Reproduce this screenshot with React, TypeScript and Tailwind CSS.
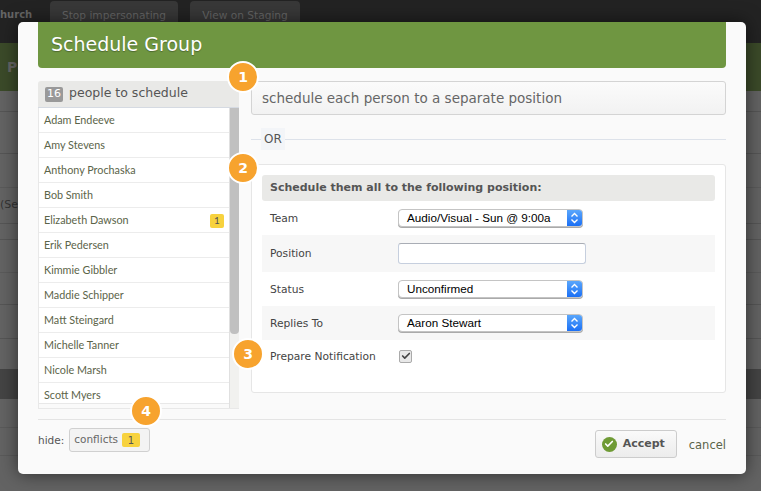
import { Check } from "lucide-react"

const people = [
  "Adam Endeeve",
  "Amy Stevens",
  "Anthony Prochaska",
  "Bob Smith",
  "Elizabeth Dawson",
  "Erik Pedersen",
  "Kimmie Gibbler",
  "Maddie Schipper",
  "Matt Steingard",
  "Michelle Tanner",
  "Nicole Marsh",
  "Scott Myers",
]

const sans = "font-['DejaVu_Sans',sans-serif]"

function Step({ n, className }: { n: number; className: string }) {
  return (
    <div
      className={`absolute flex h-[32px] w-[32px] items-center justify-center rounded-full border-[2px] border-white bg-[#f7a32e] text-[14px] font-bold text-white ${className}`}
    >
      {n}
    </div>
  )
}

function Flag({ className = "" }: { className?: string }) {
  return (
    <span
      className={`flex h-[14px] w-[14px] items-center justify-center rounded-[2px] bg-[#f7d23e] text-[10px] text-[#555] ${className}`}
    >
      1
    </span>
  )
}

function FakeSelect({ value }: { value: string }) {
  return (
    <div className="flex h-[18px] w-[185px] items-stretch overflow-hidden rounded-[4px] border border-[#c4c4c4] bg-white shadow-[0_1px_0_#aaa]">
      <span className="flex-1 pl-[8px] font-['Liberation_Sans',sans-serif] text-[11.7px] leading-[16px] text-black">
        {value}
      </span>
      <span className="flex w-[15px] items-center justify-center bg-gradient-to-b from-[#5aa6fb] to-[#1a6ff5]">
        <svg width="9" height="12" viewBox="0 0 9 12" fill="none" stroke="#fff" strokeWidth="1.4">
          <path d="M1.5 4.5 4.5 1.5l3 3M1.5 7.5l3 3 3-3" />
        </svg>
      </span>
    </div>
  )
}

function FormRow({
  label,
  shaded,
  height,
  children,
}: {
  label: string
  shaded?: boolean
  height: string
  children: React.ReactNode
}) {
  return (
    <div className={`flex items-center ${height} ${shaded ? "bg-[#f7f7f7]" : ""}`}>
      <span className="w-[136px] shrink-0 pl-[8px] pt-[2px] text-[10.7px] text-[#444]">{label}</span>
      {children}
    </div>
  )
}

export default function App() {
  return (
    <div className={`relative h-[491px] w-[761px] overflow-hidden bg-[#636363] ${sans}`}>
      {/* page behind the dialog */}
      <div className="flex h-[43px] items-start gap-[12px] overflow-hidden bg-[#232323] pt-[1px]">
        <span className="w-[38px] shrink-0 pt-[6px] text-[10px] font-bold text-[#666]">hurch</span>
        <div className="flex h-[28px] w-[128px] items-start justify-center rounded-[4px] bg-[#383838] pt-[7px] text-[10.6px] text-[#666]">
          Stop impersonating
        </div>
        <div className="flex h-[28px] w-[110px] items-start justify-center rounded-[4px] bg-[#383838] pt-[7px] text-[10.6px] text-[#666]">
          View on Staging
        </div>
      </div>
      <div className="flex h-[48px] items-center bg-[#3b4a29] pl-[7px] text-[14px] font-bold text-[#666]">Pe</div>
      <div className="h-[21px] border-b border-[#555]" />
      <div className="h-[42px] border-b border-[#555]" />
      <div className="h-[34px] border-b border-[#5a5a5a]" />
      <div className="flex h-[36px] items-center border-b border-[#555] text-[11px] text-[#333]">(Sec</div>
      <div className="h-[16px] border-b border-[#555]" />
      <div className="h-[33px] border-b border-[#5a5a5a]" />
      <div className="h-[32px] border-b border-[#555]" />
      <div className="h-[34px] border-b border-[#555]" />
      <div className="h-[30px]" />
      <div className="h-[30px] bg-[#444]" />
      <div className="h-[29px] border-b border-[#5a5a5a]" />
      <div className="h-[28px] border-b border-[#5a5a5a]" />

      {/* dialog */}
      <div className="absolute left-[18px] top-[22px] h-[452px] w-[728px] rounded-[5px] bg-[#fafafa] px-[20px] shadow-[0_0_18px_rgba(0,0,0,0.55)]">
        <div className="flex h-[46px] items-center rounded-b-[4px] bg-[#6f9641] pb-[2px] pl-[13px] text-[19px] text-white [text-shadow:0_1px_1px_rgba(0,0,0,0.3)]">
          Schedule Group
        </div>

        <div className="mt-[13px] flex gap-[12px]">
          {/* people list */}
          <div className="w-[201px] shrink-0">
            <div className="flex h-[27px] items-center gap-[6px] rounded-t-[3px] border-b border-[#d5dae2] bg-[#e9e9e7] pb-[2px] pl-[7px] text-[12.5px] text-[#555]">
              <span className="mt-[2px] flex h-[15px] w-[18px] items-center justify-center rounded-[2px] bg-[#999] text-[11px] text-white">
                16
              </span>
              people to schedule
            </div>
            <div className="flex h-[301px] border-b border-l border-[#e8e8e8]">
              <div className="h-[296px] flex-1 overflow-hidden border-b border-[#e8e8e8] bg-white">
                {people.map((p) => (
                  <div
                    key={p}
                    className="flex h-[25px] items-center justify-between border-b border-[#ececec] px-[5px] pt-[1px] font-['Lato',sans-serif] text-[10.8px] text-[#5b6449]"
                  >
                    {p}
                    {p === "Elizabeth Dawson" && <Flag />}
                  </div>
                ))}
              </div>
              <div className="w-[10px] border-l border-[#e0e0e0] bg-[#f1f1ef]">
                <div className="h-[226px] rounded-b-[4px] bg-[#c0c0c0]" />
              </div>
            </div>
          </div>

          {/* options */}
          <div className="flex-1">
            <div className="flex h-[34px] items-center rounded-[3px] border border-[#d4d4d4] bg-gradient-to-b from-[#fbfbfb] to-[#f2f2f2] pl-[10px] text-[13.5px] text-[#666]">
              schedule each person to a separate position
            </div>

            <div className="mt-[13px] flex h-[22px] items-center">
              <span className="h-px w-[10px] bg-[#dde2ea]" />
              <span className="flex h-[22px] w-[24px] items-center justify-center bg-[#f3f5f8] text-[12px] text-[#555]">
                OR
              </span>
              <span className="h-px flex-1 bg-[#dde2ea]" />
            </div>

            <div className="mt-[14px] h-[229px] rounded-[3px] border border-[#e6e6e6] bg-white px-[10px] pt-[10px]">
              <div className="flex h-[26px] items-center rounded-[3px] bg-[#e9e9e7] pl-[8px] pt-[1px] text-[11px] font-bold text-[#555]">
                Schedule them all to the following position:
              </div>
              <FormRow label="Team" height="h-[34px]">
                <FakeSelect value="Audio/Visual - Sun @ 9:00a" />
              </FormRow>
              <FormRow label="Position" height="h-[37px]" shaded>
                <div className="h-[21px] w-[188px] rounded-[3px] border border-[#c6cfde] border-t-[#a9adb5] bg-white" />
              </FormRow>
              <FormRow label="Status" height="h-[34px]">
                <FakeSelect value="Unconfirmed" />
              </FormRow>
              <FormRow label="Replies To" height="h-[34px]" shaded>
                <FakeSelect value="Aaron Stewart" />
              </FormRow>
              <FormRow label="Prepare Notification" height="h-[32px]">
                <span className="ml-[1px] flex h-[13px] w-[13px] items-center justify-center rounded-[2px] border border-[#aaa] bg-[#e8e8e8]">
                  <Check size={10} strokeWidth={4} className="text-[#444]" />
                </span>
              </FormRow>
            </div>
          </div>
        </div>

        <div className="mt-[10px] flex h-[55px] items-start border-t border-[#e4e4e4]">
          <span className="pt-[13px] text-[10.5px] text-[#555]">hide:</span>
          <div className="ml-[5px] mt-[8px] flex h-[24px] w-[81px] items-center gap-[4px] rounded-[3px] border border-[#d0d0d0] bg-[#f3f3f3] pl-[4px] text-[10.5px] text-[#666]">
            conflicts
            <Flag className="w-[18px]" />
          </div>
          <div className="ml-auto mt-[10px] flex h-[28px] w-[82px] items-center gap-[6px] rounded-[3px] border border-[#ccc] bg-gradient-to-b from-[#fafafa] to-[#ececec] pl-[6px] text-[11px] font-bold text-[#555]">
            <span className="flex h-[15px] w-[15px] items-center justify-center rounded-full bg-[#6f9b35]">
              <Check size={10} strokeWidth={4} className="text-white" />
            </span>
            Accept
          </div>
          <span className="ml-[12px] pt-[17px] text-[11.5px] text-[#5b6449]">cancel</span>
        </div>
      </div>

      <Step n={1} className="left-[227px] top-[61px]" />
      <Step n={2} className="left-[227px] top-[152px]" />
      <Step n={3} className="left-[232px] top-[338px]" />
      <Step n={4} className="left-[130px] top-[395px]" />
    </div>
  )
}
